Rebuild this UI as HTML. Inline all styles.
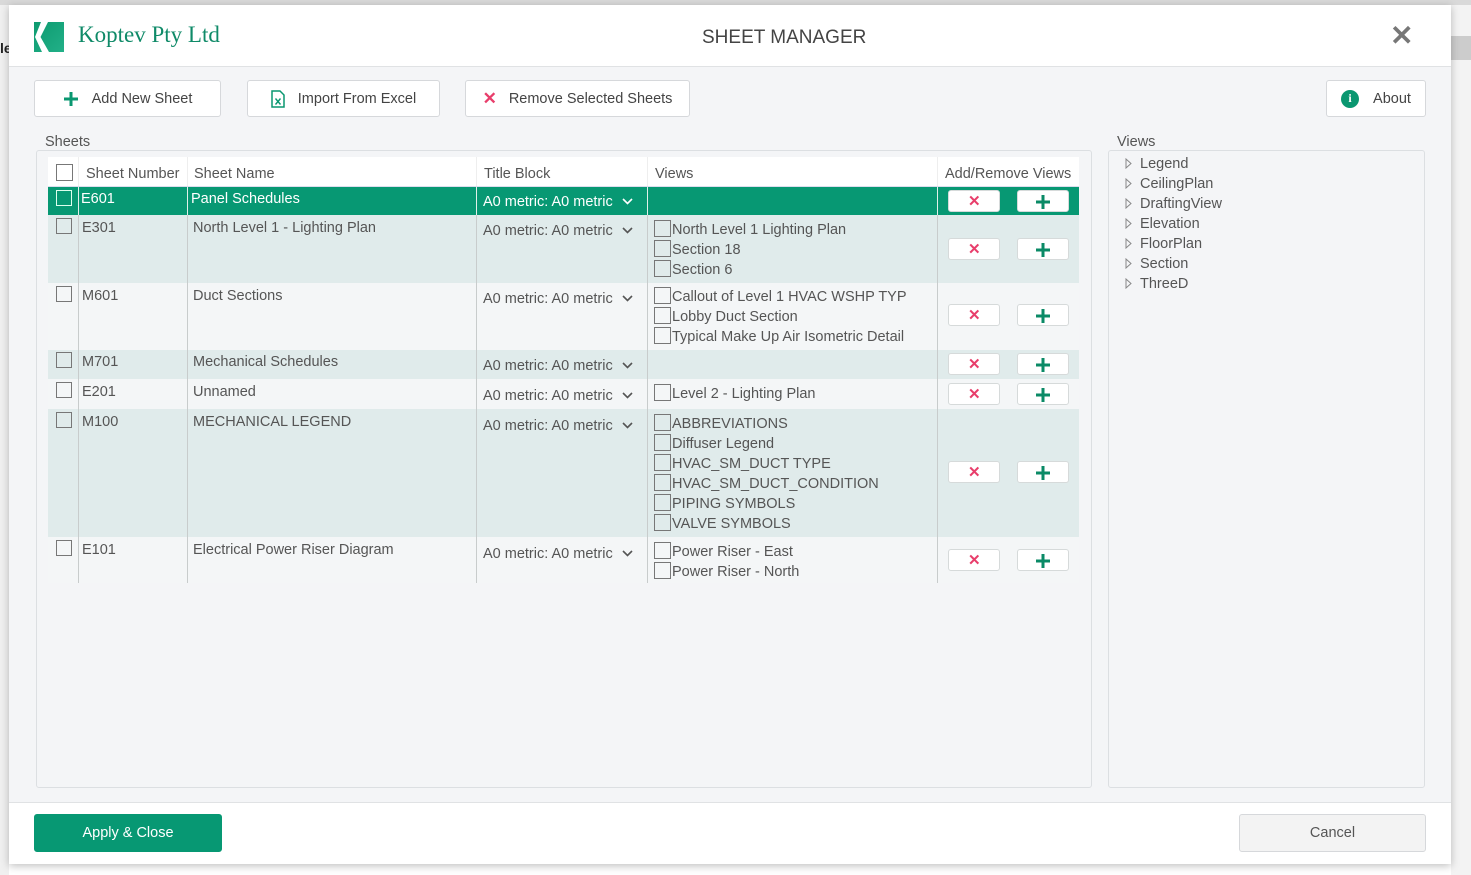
<!DOCTYPE html>
<html><head><meta charset="utf-8"><style>
*{box-sizing:border-box;margin:0;padding:0}
body{width:1471px;height:875px;overflow:hidden;background:#fff;font-family:"Liberation Sans",sans-serif;color:#555;font-size:14px;position:relative}
.a{position:absolute}
.btn{position:absolute;background:#fff;border:1px solid #d6d8db;border-radius:3px;font-size:14.5px;color:#444;display:flex;align-items:center;justify-content:center}
.cb{display:inline-block;width:16px;height:16px;border:1px solid #777;background:transparent;vertical-align:middle}
.row{position:absolute;left:48px;width:1031px}
.row .c{position:absolute;top:0;bottom:0;border-right:1px solid #c8cccc}
.t{position:absolute;white-space:nowrap;font-size:14.5px}
.sb{position:absolute;width:52px;height:22px;background:#fff;border:1px solid #d6dada;border-radius:3px}
.vl{position:absolute;left:606px;font-size:14.5px;white-space:nowrap;line-height:20px}
.vl .cb{width:17px;height:17px;margin-right:1px;vertical-align:-3px}
.dd{position:absolute;left:435px;font-size:14.5px;white-space:nowrap}
.dd svg{margin-left:9px;vertical-align:1px}
.tree div{height:20px;line-height:20px;position:relative;padding-left:16px}
.tree svg{position:absolute;left:1px;top:4px}
</style></head><body>
<div class="a" style="left:0;top:0;width:1471px;height:5px;background:#d9d9d9"></div>
<div class="a" style="left:0;top:5px;width:9px;height:870px;background:#f0f0f0"></div>
<div class="a" style="left:0;top:40px;font-size:14px;color:#222;font-weight:bold">le</div>
<div class="a" style="left:1451px;top:5px;width:20px;height:870px;background:#f3f3f3"></div>
<div class="a" style="left:1451px;top:36px;width:20px;height:24px;background:#ccc"></div>

<div class="a" style="left:9px;top:5px;width:1442px;height:859px;background:#f4f5f7;box-shadow:0 2px 8px rgba(0,0,0,.25)">
 <div class="a" style="left:0;top:0;width:1442px;height:62px;background:#fff;border-bottom:1px solid #e0e2e4"></div>
 <svg class="a" style="left:25px;top:17px" width="30" height="30" viewBox="0 0 30 30"><defs><linearGradient id="g" x1="0" y1="0" x2="1" y2="1"><stop offset="0" stop-color="#0d9a6f"/><stop offset="1" stop-color="#22b088"/></linearGradient></defs><rect width="30" height="30" fill="url(#g)"/><path d="M7 0H14L6.5 15L15 30H8L1 15Z" fill="#fff"/></svg>
 <div class="a" style="left:69px;top:17px;font-family:'Liberation Serif',serif;font-size:23px;color:#0f8a68">Koptev Pty Ltd</div>
 <div class="a" style="left:693px;top:22px;font-size:19px;color:#444">SHEET MANAGER</div>
 <div class="a" style="left:1381px;top:14px;font-size:28px;color:#777;font-weight:bold">✕</div>
 <div class="a" style="left:0;top:797px;width:1442px;height:62px;background:#fff;border-top:1px solid #e0e2e4"></div>
</div>

<div class="btn" style="left:34px;top:80px;width:187px;height:37px"><svg width="16" height="16" style="margin-right:13px" viewBox="0 0 16 16"><path d="M8 1V15M1 8H15" stroke="#0a9770" stroke-width="3"/></svg>Add New Sheet</div>
<div class="btn" style="left:247px;top:80px;width:193px;height:37px"><svg width="14" height="18" style="margin-right:13px" viewBox="0 0 14 18"><path d="M1 1H9L13 5V17H1Z" fill="none" stroke="#0a9770" stroke-width="1.5"/><path d="M4.5 8.5L9.5 14.5M9.5 8.5L4.5 14.5" stroke="#0a9770" stroke-width="1.4"/></svg>Import From Excel</div>
<div class="btn" style="left:465px;top:80px;width:225px;height:37px"><span style="color:#e83e6b;font-size:17px;font-weight:bold;margin-right:12px">✕</span>Remove Selected Sheets</div>
<div class="btn" style="left:1326px;top:80px;width:100px;height:37px"><span style="display:inline-flex;width:18px;height:18px;border-radius:50%;background:#0a9770;color:#fff;font-size:12px;font-weight:bold;align-items:center;justify-content:center;margin-right:14px;font-family:'Liberation Serif',serif">i</span>About</div>

<div class="a" style="left:36px;top:150px;width:1056px;height:638px;border:1px solid #dcdfe2;border-radius:3px"></div>
<div class="a" style="left:41px;top:134px;background:#f4f5f7;padding:0 4px;font-size:14.5px">Sheets</div>
<div class="a" style="left:1108px;top:150px;width:317px;height:638px;border:1px solid #dcdfe2;border-radius:3px"></div>
<div class="a" style="left:1113px;top:134px;background:#f4f5f7;padding:0 4px;font-size:14.5px">Views</div>
<div class="a tree" style="left:1124px;top:154px;font-size:14.5px;color:#555">
<div><svg width="7" height="11"><path d="M1 1L6 5.5L1 10Z" fill="none" stroke="#888"/></svg>Legend</div>
<div><svg width="7" height="11"><path d="M1 1L6 5.5L1 10Z" fill="none" stroke="#888"/></svg>CeilingPlan</div>
<div><svg width="7" height="11"><path d="M1 1L6 5.5L1 10Z" fill="none" stroke="#888"/></svg>DraftingView</div>
<div><svg width="7" height="11"><path d="M1 1L6 5.5L1 10Z" fill="none" stroke="#888"/></svg>Elevation</div>
<div><svg width="7" height="11"><path d="M1 1L6 5.5L1 10Z" fill="none" stroke="#888"/></svg>FloorPlan</div>
<div><svg width="7" height="11"><path d="M1 1L6 5.5L1 10Z" fill="none" stroke="#888"/></svg>Section</div>
<div><svg width="7" height="11"><path d="M1 1L6 5.5L1 10Z" fill="none" stroke="#888"/></svg>ThreeD</div>
</div>

<!-- header -->
<div class="row" style="top:157px;height:30px;background:#fff;border-bottom:1px solid #dde">
 <div class="c" style="left:0;width:31px;border-right:1px solid #eee"></div>
 <div class="c" style="left:31px;width:109px;border-right:1px solid #eee"></div>
 <div class="c" style="left:140px;width:289px;border-right:1px solid #eee"></div>
 <div class="c" style="left:429px;width:171px;border-right:1px solid #eee"></div>
 <div class="c" style="left:600px;width:290px;border-right:1px solid #eee"></div>
 <span class="cb" style="position:absolute;left:8px;top:7px;width:17px;height:17px"></span>
 <div class="t" style="left:38px;top:9px">Sheet Number</div>
 <div class="t" style="left:146px;top:9px">Sheet Name</div>
 <div class="t" style="left:436px;top:9px">Title Block</div>
 <div class="t" style="left:607px;top:9px">Views</div>
 <div class="t" style="left:897px;top:9px">Add/Remove Views</div>
</div>

<!-- E601 -->
<div class="row" style="top:187px;height:28px;background:#079873;color:#fff">
 <div class="c" style="left:0;width:31px;border-color:#e0f0ea"></div><div class="c" style="left:31px;width:109px;border-color:#e0f0ea"></div><div class="c" style="left:140px;width:289px;border-color:#e0f0ea"></div><div class="c" style="left:429px;width:171px;border-color:#e0f0ea"></div><div class="c" style="left:600px;width:290px;border-color:#e0f0ea"></div>
 <span class="cb" style="position:absolute;left:8px;top:3px;border-color:#dfe"></span>
 <div class="t" style="left:33px;top:4px;color:#fff">E601</div>
 <div class="t" style="left:143px;top:4px;color:#fff">Panel Schedules</div>
 <div class="dd" style="top:7px;color:#fff">A0 metric: A0 metric<svg width="11" height="7"><path d="M1 1L5.5 5.5L10 1" fill="none" stroke="#fff" stroke-width="1.6"/></svg></div>
 <div class="sb" style="left:900px;top:3px"><span style="position:absolute;left:19px;top:1px;color:#e83e6b;font-weight:bold;font-size:15px">✕</span></div>
 <div class="sb" style="left:969px;top:3px"><svg style="position:absolute;left:17px;top:3px" width="16" height="16"><path d="M8 1V15M1 8H15" stroke="#0a8a66" stroke-width="3"/></svg></div>
</div>

<!-- E301 -->
<div class="row" style="top:215px;height:68px;background:#e0ebeb">
 <div class="c" style="left:0;width:31px"></div><div class="c" style="left:31px;width:109px"></div><div class="c" style="left:140px;width:289px"></div><div class="c" style="left:429px;width:171px"></div><div class="c" style="left:600px;width:290px"></div>
 <span class="cb" style="position:absolute;left:8px;top:3px"></span>
 <div class="t" style="left:34px;top:5px">E301</div><div class="t" style="left:145px;top:5px">North Level 1 - Lighting Plan</div>
 <div class="dd" style="top:8px">A0 metric: A0 metric<svg width="11" height="7"><path d="M1 1L5.5 5.5L10 1" fill="none" stroke="#555" stroke-width="1.6"/></svg></div>
 <div class="vl" style="top:5px"><div><span class="cb"></span>North Level 1 Lighting Plan</div><div><span class="cb"></span>Section 18</div><div><span class="cb"></span>Section 6</div></div>
 <div class="sb" style="left:900px;top:23px"><span style="position:absolute;left:19px;top:1px;color:#e83e6b;font-weight:bold;font-size:15px">✕</span></div>
 <div class="sb" style="left:969px;top:23px"><svg style="position:absolute;left:17px;top:3px" width="16" height="16"><path d="M8 1V15M1 8H15" stroke="#0a8a66" stroke-width="3"/></svg></div>
</div>

<!-- M601 -->
<div class="row" style="top:283px;height:67px;background:#f4f6f7">
 <div class="c" style="left:0;width:31px"></div><div class="c" style="left:31px;width:109px"></div><div class="c" style="left:140px;width:289px"></div><div class="c" style="left:429px;width:171px"></div><div class="c" style="left:600px;width:290px"></div>
 <span class="cb" style="position:absolute;left:8px;top:3px"></span>
 <div class="t" style="left:34px;top:5px">M601</div><div class="t" style="left:145px;top:5px">Duct Sections</div>
 <div class="dd" style="top:8px">A0 metric: A0 metric<svg width="11" height="7"><path d="M1 1L5.5 5.5L10 1" fill="none" stroke="#555" stroke-width="1.6"/></svg></div>
 <div class="vl" style="top:4px"><div><span class="cb"></span>Callout of Level 1 HVAC WSHP TYP</div><div><span class="cb"></span>Lobby Duct Section</div><div><span class="cb"></span>Typical Make Up Air Isometric Detail</div></div>
 <div class="sb" style="left:900px;top:21px"><span style="position:absolute;left:19px;top:1px;color:#e83e6b;font-weight:bold;font-size:15px">✕</span></div>
 <div class="sb" style="left:969px;top:21px"><svg style="position:absolute;left:17px;top:3px" width="16" height="16"><path d="M8 1V15M1 8H15" stroke="#0a8a66" stroke-width="3"/></svg></div>
</div>

<!-- M701 -->
<div class="row" style="top:350px;height:29px;background:#e0ebeb">
 <div class="c" style="left:0;width:31px"></div><div class="c" style="left:31px;width:109px"></div><div class="c" style="left:140px;width:289px"></div><div class="c" style="left:429px;width:171px"></div><div class="c" style="left:600px;width:290px"></div>
 <span class="cb" style="position:absolute;left:8px;top:2px"></span>
 <div class="t" style="left:34px;top:4px">M701</div><div class="t" style="left:145px;top:4px">Mechanical Schedules</div>
 <div class="dd" style="top:8px">A0 metric: A0 metric<svg width="11" height="7"><path d="M1 1L5.5 5.5L10 1" fill="none" stroke="#555" stroke-width="1.6"/></svg></div>
 <div class="sb" style="left:900px;top:3px"><span style="position:absolute;left:19px;top:1px;color:#e83e6b;font-weight:bold;font-size:15px">✕</span></div>
 <div class="sb" style="left:969px;top:3px"><svg style="position:absolute;left:17px;top:3px" width="16" height="16"><path d="M8 1V15M1 8H15" stroke="#0a8a66" stroke-width="3"/></svg></div>
</div>

<!-- E201 -->
<div class="row" style="top:379px;height:30px;background:#f4f6f7">
 <div class="c" style="left:0;width:31px"></div><div class="c" style="left:31px;width:109px"></div><div class="c" style="left:140px;width:289px"></div><div class="c" style="left:429px;width:171px"></div><div class="c" style="left:600px;width:290px"></div>
 <span class="cb" style="position:absolute;left:8px;top:3px"></span>
 <div class="t" style="left:34px;top:5px">E201</div><div class="t" style="left:145px;top:5px">Unnamed</div>
 <div class="dd" style="top:9px">A0 metric: A0 metric<svg width="11" height="7"><path d="M1 1L5.5 5.5L10 1" fill="none" stroke="#555" stroke-width="1.6"/></svg></div>
 <div class="vl" style="top:5px"><div><span class="cb"></span>Level 2 - Lighting Plan</div></div>
 <div class="sb" style="left:900px;top:4px"><span style="position:absolute;left:19px;top:1px;color:#e83e6b;font-weight:bold;font-size:15px">✕</span></div>
 <div class="sb" style="left:969px;top:4px"><svg style="position:absolute;left:17px;top:3px" width="16" height="16"><path d="M8 1V15M1 8H15" stroke="#0a8a66" stroke-width="3"/></svg></div>
</div>

<!-- M100 -->
<div class="row" style="top:409px;height:128px;background:#e0ebeb">
 <div class="c" style="left:0;width:31px"></div><div class="c" style="left:31px;width:109px"></div><div class="c" style="left:140px;width:289px"></div><div class="c" style="left:429px;width:171px"></div><div class="c" style="left:600px;width:290px"></div>
 <span class="cb" style="position:absolute;left:8px;top:3px"></span>
 <div class="t" style="left:34px;top:5px">M100</div><div class="t" style="left:145px;top:5px">MECHANICAL LEGEND</div>
 <div class="dd" style="top:9px">A0 metric: A0 metric<svg width="11" height="7"><path d="M1 1L5.5 5.5L10 1" fill="none" stroke="#555" stroke-width="1.6"/></svg></div>
 <div class="vl" style="top:5px"><div><span class="cb"></span>ABBREVIATIONS</div><div><span class="cb"></span>Diffuser Legend</div><div><span class="cb"></span>HVAC_SM_DUCT TYPE</div><div><span class="cb"></span>HVAC_SM_DUCT_CONDITION</div><div><span class="cb"></span>PIPING SYMBOLS</div><div><span class="cb"></span>VALVE SYMBOLS</div></div>
 <div class="sb" style="left:900px;top:52px"><span style="position:absolute;left:19px;top:1px;color:#e83e6b;font-weight:bold;font-size:15px">✕</span></div>
 <div class="sb" style="left:969px;top:52px"><svg style="position:absolute;left:17px;top:3px" width="16" height="16"><path d="M8 1V15M1 8H15" stroke="#0a8a66" stroke-width="3"/></svg></div>
</div>

<!-- E101 -->
<div class="row" style="top:537px;height:46px;background:#f4f6f7">
 <div class="c" style="left:0;width:31px"></div><div class="c" style="left:31px;width:109px"></div><div class="c" style="left:140px;width:289px"></div><div class="c" style="left:429px;width:171px"></div><div class="c" style="left:600px;width:290px"></div>
 <span class="cb" style="position:absolute;left:8px;top:3px"></span>
 <div class="t" style="left:34px;top:5px">E101</div><div class="t" style="left:145px;top:5px">Electrical Power Riser Diagram</div>
 <div class="dd" style="top:9px">A0 metric: A0 metric<svg width="11" height="7"><path d="M1 1L5.5 5.5L10 1" fill="none" stroke="#555" stroke-width="1.6"/></svg></div>
 <div class="vl" style="top:5px"><div><span class="cb"></span>Power Riser - East</div><div><span class="cb"></span>Power Riser - North</div></div>
 <div class="sb" style="left:900px;top:12px"><span style="position:absolute;left:19px;top:1px;color:#e83e6b;font-weight:bold;font-size:15px">✕</span></div>
 <div class="sb" style="left:969px;top:12px"><svg style="position:absolute;left:17px;top:3px" width="16" height="16"><path d="M8 1V15M1 8H15" stroke="#0a8a66" stroke-width="3"/></svg></div>
</div>

<div class="btn" style="left:34px;top:814px;width:188px;height:38px;background:#079873;border-color:#079873;color:#fff">Apply &amp; Close</div>
<div class="btn" style="left:1239px;top:814px;width:187px;height:38px;background:#f3f3f3;color:#555">Cancel</div>
</body></html>
